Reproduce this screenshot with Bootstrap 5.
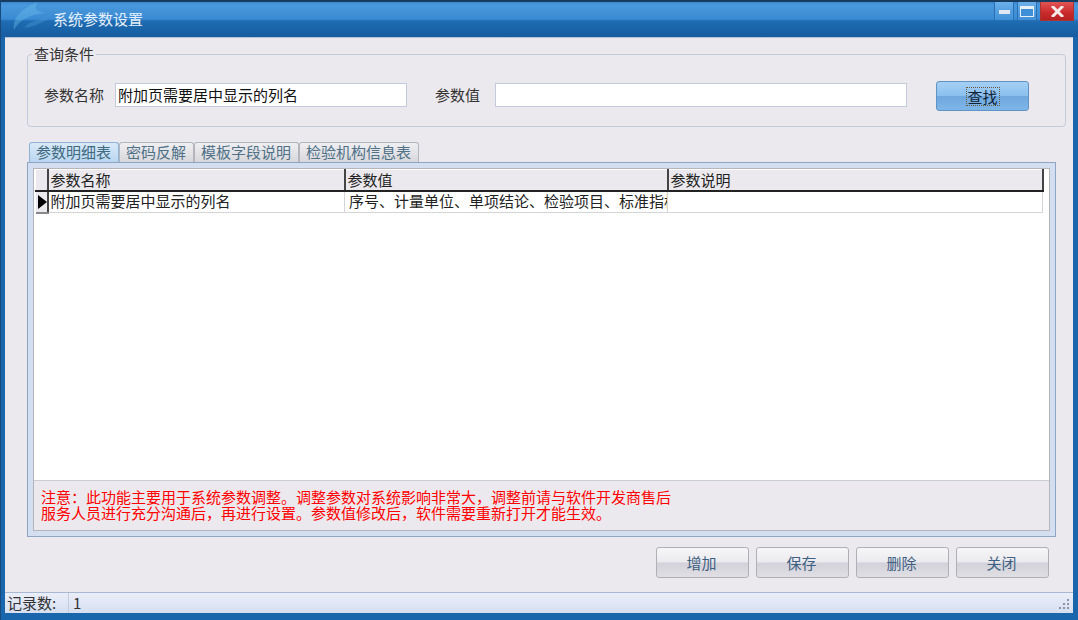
<!DOCTYPE html>
<html lang="zh-CN">
<head>
    <meta charset="UTF-8">
    <title>系统参数设置</title>
    <link rel="stylesheet" href="https://cdn.jsdelivr.net/npm/bootstrap@5.3.0/dist/css/bootstrap.min.css">
    <style>
        html, body { height: 620px; overflow: hidden; }
        body { font-family: "Noto Sans CJK SC", "Liberation Sans", sans-serif; font-size: 15px; line-height: 20px; color: #222; background: #1a66ad; }
        .win { width: 1078px; height: 620px; border-top: 2px solid #173c60; border-left: 1px solid #174a7c; }
        .titlebar { height: 35px; background: linear-gradient(#3a88d0 0, #4a98dc 3px, #3a8bd4 17px, #1e6cb3 19px, #175c9f 35px); position: relative; }
        .title-text { color: #e6f0fa; padding-left: 52px; padding-top: 7px; }
        .logo { position: absolute; left: 9px; top: 0; }
        .winbtns { position: absolute; top: 0; right: 4px; gap: 3px; }
        .winbtn { width: 20px; height: 19px; border: 1px solid #2a6fb2; border-top: 0; background: linear-gradient(#6cb0ea, #3f8fd8); display: flex; align-items: center; justify-content: center; }
        .winbtn.closer { width: 34px; border-color: #a33; background: linear-gradient(#e25555, #c92a2a 60%, #b72222); }
        .client { margin: 0 0 0 4px; width: 1068px; height: 555px; background: #ebe9ed; border-top: 1px solid #b5c3da; }
        .qbox { margin: 7px 0 0 22px; width: 1039px; height: 82px; border: 1px solid #c3cbd9; border-radius: 4px; padding: 0 0 0 16px; }
        .qbox legend { float: none; width: auto; font-size: 15px; line-height: 18px; margin: 0 0 0 -12px; padding: 0 2px; color: #333; }
        .qrow { margin-top: 16px; }
        .qlabel { color: #333; }
        .name-label { margin-right: 11px; }
        .val-label { margin: 0 15px 0 28px; }
        .qinput { height: 24px; border: 1px solid #c2cbdb; background: #fff; color: #111; padding: 0 2px 2px; font-size: 15px; line-height: 20px; outline: 0; font-family: inherit; }
        .find-wrap { margin: 0 4px 0 29px; }
        .find-btn { width: 93px; height: 30px; margin-top: 2px; padding: 0; border: 1px solid #5f93c4; border-radius: 3px; font-size: 15px; color: #123; background: linear-gradient(#a5d0f5 0, #8cc0ee 48%, #6fa8de 52%, #7fb6e8 100%); display: flex; align-items: center; justify-content: center; }
        .find-btn span { border: 1px dotted #6b5a3a; line-height: 17px; padding: 0 1px; }
        .tabstrip { margin: 15px 0 0 24px; height: 20px; }
        .tabitem { height: 20px; line-height: 18px; padding: 0 7px 0 6px; color: #4f7188; border: 1px solid #b3b6bd; border-bottom: 0; border-radius: 3px 3px 0 0; background: linear-gradient(#efeef1, #d8d8dc); white-space: nowrap; }
        .tabitem.on { color: #3f6a80; border-color: #8fb2d6; background: linear-gradient(#d9e9f8, #b9d6ef); }
        .tabpanel { margin-left: 22px; width: 1029px; height: 375px; border: 1px solid #8ea5c6; background: #d3def0; padding: 5px; }
        .innerbox { height: 100%; border: 1px solid #b5b5ba; background: #fff; }
        .gridarea { height: 312px; padding: 0 7px 0 1px; background: #fff; border-bottom: 1px solid #c8ccd4; }
        .dgrid { width: 1007px; table-layout: fixed; border-collapse: collapse; }
        .dgrid th, .dgrid td { height: 21px; padding: 0 2px; font-weight: normal; line-height: 20px; white-space: nowrap; overflow: hidden; color: #222; }
        .dgrid th { background: #ebe9ed; border-bottom: 2px solid #222; border-right: 2px solid #444; border-left: 1px solid #fff; border-top: 1px solid #fff; }
        .dgrid td { background: #fff; border-bottom: 1px solid #d5d5d8; border-right: 1px solid #d5d5d8; padding-bottom: 2px; line-height: 18px; }
        .dgrid td.val-cell { padding-left: 4px; }
        .dgrid td.rowhead { background: #ebe9ed; border-right: 2px solid #444; border-bottom: 2px solid #888; padding: 0 0 0 2px; }
        .notearea { height: 49px; background: #ebe9ed; color: #f00; line-height: 16px; font-size: 15px; padding: 8px 0 0 7px; white-space: nowrap; }
        .btnrow { margin: 10px 0 0 651px; gap: 7px; }
        .act-btn { width: 93px; height: 31px; padding: 0 2px 0 0; border: 1px solid #b0b0b4; border-radius: 3px; font-size: 15px; color: #3d5f82; background: linear-gradient(#f6f5f7 0, #ebeaee 48%, #d3d1d9 52%, #e0dfe4 100%); }
        .statusbar { margin: 14px 0 0 0; height: 21px; border-top: 1px solid #a9b8d2; background: linear-gradient(#eaeef8, #d6dff0); color: #333; line-height: 19px; position: relative; }
        .stat-l { width: 64px; padding-left: 2px; border-right: 1px solid #c3cde0; }
        .stat-v { padding-left: 4px; }
        .grip { position: absolute; right: 3px; bottom: 3px; }
    </style>
</head>
<body>
<div class="win">
    <div class="titlebar">
        <svg class="logo" width="60" height="35" viewBox="0 0 60 35">
            <path d="M28 0 C12 6 2 16 4 28 C9 18 20 12 36 11 C28 10 22 7 28 0 Z" fill="#6cc0ea" opacity="0.38"/>
            <path d="M14 26 C18 20 28 17 38 17 C30 22 22 25 14 26 Z" fill="#6cc0ea" opacity="0.22"/>
        </svg>
        <div class="title-text">系统参数设置</div>
        <div class="winbtns d-flex">
            <div class="winbtn"><svg width="11" height="5"><rect width="11" height="4" y="1" fill="#dfe8f2"/></svg></div>
            <div class="winbtn"><svg width="14" height="11"><rect x="0.5" y="0.5" width="13" height="10" fill="#3f8fd8" stroke="#e8eef6"/><rect y="0" width="14" height="3" fill="#e8eef6"/></svg></div>
            <div class="winbtn closer"><svg width="13" height="11"><path d="M1 0 L12 11 M12 0 L1 11" stroke="#f6eaea" stroke-width="3"/></svg></div>
        </div>
    </div>
    <div class="client">
        <fieldset class="qbox">
            <legend>查询条件</legend>
            <div class="qrow d-flex align-items-center">
                <span class="qlabel name-label">参数名称</span>
                <input class="qinput" style="width:292px" value="附加页需要居中显示的列名">
                <span class="qlabel val-label">参数值</span>
                <input class="qinput" style="width:412px">
                <div class="find-wrap"><button class="find-btn"><span>查找</span></button></div>
            </div>
        </fieldset>

        <div class="tabstrip d-flex">
            <div class="tabitem on">参数明细表</div>
            <div class="tabitem">密码反解</div>
            <div class="tabitem">模板字段说明</div>
            <div class="tabitem">检验机构信息表</div>
        </div>
        <div class="tabpanel">
            <div class="innerbox">
                <div class="gridarea">
                    <table class="dgrid">
                        <colgroup>
                            <col style="width:12px"><col style="width:297px"><col style="width:323px"><col style="width:375px">
                        </colgroup>
                        <tr><th></th><th>参数名称</th><th>参数值</th><th>参数说明</th></tr>
                        <tr>
                            <td class="rowhead"><svg width="9" height="14" class="d-block"><path d="M0 0 L9 7 L0 14 Z" fill="#000"/></svg></td>
                            <td>附加页需要居中显示的列名</td>
                            <td class="val-cell">序号、计量单位、单项结论、检验项目、标准指标、实测值</td>
                            <td></td>
                        </tr>
                    </table>
                </div>
                <div class="notearea">注意：此功能主要用于系统参数调整。调整参数对系统影响非常大，调整前请与软件开发商售后<br>服务人员进行充分沟通后，再进行设置。参数值修改后，软件需要重新打开才能生效。</div>
            </div>
        </div>
        <div class="btnrow d-flex">
            <button class="act-btn">增加</button>
            <button class="act-btn">保存</button>
            <button class="act-btn">删除</button>
            <button class="act-btn">关闭</button>
        </div>
        <div class="statusbar d-flex">
            <div class="stat-l">记录数:</div>
            <div class="stat-v">1</div>
            <svg class="grip" width="14" height="12" fill="#8a94a8"><rect x="11" y="1" width="2" height="2"/><rect x="7" y="5" width="2" height="2"/><rect x="11" y="5" width="2" height="2"/><rect x="3" y="9" width="2" height="2"/><rect x="7" y="9" width="2" height="2"/><rect x="11" y="9" width="2" height="2"/></svg>
        </div>
    </div>
</div>
<script src="https://cdn.jsdelivr.net/npm/bootstrap@5.3.0/dist/js/bootstrap.bundle.min.js"></script>
</body>
</html>
